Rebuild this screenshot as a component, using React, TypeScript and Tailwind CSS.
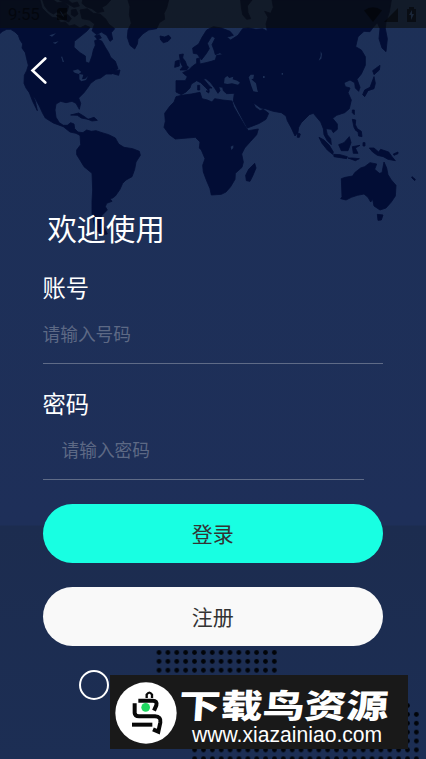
import type { ReactNode } from 'react';

const SEA = '#1d3057';
const LAND = '#020d35';

const land = [
  // north + central america
  'M0 100L8 94 20 88 32 88 45 96 55 106 60 120 68 132 66 144 76 158 80 176 85 196 80 212 73 226 72 250 78 264 88 278 98 304 112 332 106 304 98 286 106 296 118 318 128 340 136 354 160 369 190 380 210 396 228 400 240 406 248 398 234 396 224 386 222 372 212 368 202 376 190 376 178 368 168 352 165 330 168 312 182 304 198 308 216 304 228 310 238 328 242 310 236 294 252 278 264 262 272 250 288 238 302 234 318 222 336 222 344 212 354 206 346 184 332 172 326 158 316 142 306 124 294 118 284 122 286 136 280 150 276 168 268 190 257 186 256 168 240 158 222 142 223 124 238 112 250 102 262 92 270 82 256 76 240 84 224 74 208 78 196 66 182 68 172 54 156 52 140 38 126 24 120 0 0 0Z',
  'M128 0L160 0 172 8 190 6 206 18 202 34 186 42 170 36 160 42 146 34 134 18Z',
  'M168 46L190 48 204 44 214 56 206 66 188 58Z',
  'M178 0L204 0 216 10 232 6 238 18 222 22 204 12Z',
  'M214 30L228 28 234 42 224 50 214 44Z',
  'M248 0L332 0 320 14 306 22 312 34 292 38 276 26 258 20 246 10Z',
  'M240 30L262 26 280 40 300 42 318 58 326 72 344 86 334 98 338 118 330 124 320 106 304 96 290 104 276 92 284 72 268 60 246 56Z',
  'M284 108L298 104 304 114 292 118Z',
  'M322 216L338 204 346 212 360 210 356 226 342 222Z',
  'M212 345L236 339 254 350 264 358 244 354 232 346Z',
  'M264 358L282 352 292 361 276 363Z',
  // greenland, iceland
  'M384 0L506 0 500 24 492 40 494 58 478 68 470 86 446 90 428 102 414 118 412 132 404 147 390 136 382 112 384 90 394 70 388 44 390 20Z',
  'M480 108L494 111 506 106 513 114 504 124 490 128 482 120Z',
  // british isles
  'M538 164L550 162 548 174 556 184 560 196 566 202 560 210 540 210 548 200 542 188Z',
  'M526 184L538 180 538 198 524 202Z',
  // south america
  'M240 404L260 390 274 394 288 392 306 398 326 404 346 414 356 432 372 442 398 446 418 454 421 466 408 486 404 508 396 530 378 540 368 550 360 568 346 588 338 594 330 596 336 604 320 610 316 620 322 630 304 648 308 670 322 702 306 704 286 688 276 640 276 604 278 570 276 520 252 500 240 480 230 464 230 450 242 434Z',
  // africa
  'M545 286L574 282 600 277 606 296 622 300 636 306 644 296 668 300 696 303 701 320 716 346 734 376 745 392 775 387 770 404 752 424 734 444 725 462 730 486 726 502 706 520 705 538 692 560 678 576 664 583 634 585 630 566 619 540 610 516 608 496 615 476 604 450 598 444 600 426 586 412 562 414 526 417 508 404 492 382 496 364 494 340 510 318 522 306 528 290Z',
  // eurasia
  'M528 242L556 242 562 230 548 218 566 210 578 198 590 190 590 176 598 174 600 192 618 188 634 184 646 180 650 166 668 164 660 158 646 164 642 150 636 134 646 114 636 108 622 130 628 146 618 162 604 180 592 162 580 160 578 144 596 132 606 112 620 90 640 80 664 84 690 94 700 106 680 112 692 120 714 106 728 86 744 84 768 88 788 86 802 94 798 72 804 52 794 34 812 40 820 22 816 0 1174 0 1168 36 1158 66 1156 86 1162 116 1158 155 1146 144 1137 116 1140 86 1132 68 1118 84 1110 95 1092 94 1074 110 1067 140 1084 150 1096 170 1096 196 1084 222 1071 238 1080 262 1076 274 1066 264 1064 248 1050 240 1032 248 1036 260 1050 264 1044 278 1054 300 1048 326 1034 338 1010 346 998 355 1012 372 1012 388 1000 398 994 388 978 386 982 404 992 416 994 434 982 422 972 404 970 386 962 366 950 352 940 340 928 344 904 368 896 382 894 396 885 408 874 384 862 362 858 348 844 338 820 334 796 326 782 324 774 318 760 308 766 322 780 332 790 328 806 340 798 358 778 370 742 384 730 362 709 322 700 303 703 280 680 281 670 272 668 262 656 260 660 272 654 280 644 264 632 248 618 236 610 236 628 258 636 264 628 264 626 272 616 262 602 248 590 242 574 252 570 264 558 276 544 284 528 276Z',
  'M722 0L756 0 742 18 744 38 752 56 740 58 728 44 724 22Z',
  'M593 256h6v14h-6Z',
  'M618 273L628 272 626 279Z',
  // japan
  'M1118 212L1126 206 1140 196 1138 210 1122 224Z',
  'M1122 230L1126 250 1122 266 1104 272 1094 290 1088 284 1094 270 1110 262Z',
  // south east asia
  'M1057 330h6v14l-6-6Z',
  'M1057 358L1067 360 1066 374 1072 386 1084 394 1086 410 1076 408 1074 396 1064 386 1070 394 1062 382Z',
  'M957 412L972 420 988 436 1000 456 998 463 982 450 966 430Z',
  'M1001 463L1020 464 1042 470 1040 476 1002 470Z',
  'M1044 474h14l20 2-12 6Z',
  'M1016 434L1032 428 1048 410 1053 428 1044 452 1024 452Z',
  'M1057 440L1080 436 1066 444 1074 460 1060 460Z',
  'M1089 428h6v10h-6Z',
  'M1108 444L1122 444 1136 456 1142 448 1166 456 1176 470 1186 482 1164 478 1150 470 1132 466 1118 456Z',
  'M1180 462l14-6 0 5-12 5Z',
  'M1236 530l10 8-2 4-9-9Z',
  'M892 398L901 402 898 412 892 412Z',
  // madagascar
  'M764 490L768 504 758 528 750 544 739 542 737 526 746 508Z',
  // australia
  'M1024 536L1026 590 1022 596 1038 600 1054 592 1072 586 1092 582 1104 592 1112 606 1118 598 1122 618 1140 630 1158 624 1174 606 1186 588 1188 556 1174 540 1164 524 1160 504 1152 486 1146 518 1138 520 1124 508 1130 492 1110 488 1094 500 1082 504 1064 518 1058 528 1036 532Z',
  'M1132 643L1149 645 1144 660 1134 661Z',
];

// inland seas and lakes
const water = [
  'M672 250L674 234 682 228 688 234 700 230 698 238 712 242 720 248 714 254 696 250 682 252Z',
  'M746 232L752 224 762 224 760 236 754 238 768 250 772 270 774 276 760 274 754 258Z',
  'M218 212L234 208 244 216 236 222 224 218Z',
  'M238 222L250 224 246 238 256 236 264 228 258 240 244 244 238 238Z',
  'M692 440l8-4v8l-6 6Z',
  'M962 154l4 8-2 14-8 6 6-14Z',
  'M148 106l20-6-12 10Z',
  'M158 128l18-4-10 8Z',
  'M186 168l6 18-4 0-4-14Z',
  'M789 228h5v6h-5Z',
  'M845 219h4v5h-4Z',
];

function WorldMap() {
  return (
    <svg className="absolute left-0 top-0" width="426" height="250" viewBox="0 0 1278 750">
      <g stroke={LAND} strokeWidth="2.5" strokeLinejoin="round" fill={LAND}>
        {land.map(d => (
          <path key={d} d={d} />
        ))}
      </g>
      <g fill={SEA}>
        {water.map(d => (
          <path key={d} d={d} />
        ))}
      </g>
    </svg>
  );
}

function Dots() {
  return (
    <svg className="absolute left-0 top-[640px]" width="426" height="119">
      <defs>
        <pattern id="dotsA" x="154.6" y="8.1" width="8.87" height="8.87" patternUnits="userSpaceOnUse">
          <circle cx="4.43" cy="4.43" r="2.4" fill="#010409" />
        </pattern>
        <pattern id="dotsB" x="190.2" y="70" width="8.87" height="8.87" patternUnits="userSpaceOnUse">
          <circle cx="4.43" cy="4.43" r="2.4" fill="#010409" />
        </pattern>
      </defs>
      <rect x="154.6" y="8.1" width="124.2" height="53" fill="url(#dotsA)" />
      <rect x="190.2" y="61.1" width="221.7" height="57.9" fill="url(#dotsB)" />
      <rect x="411.9" y="70" width="8.9" height="49" fill="url(#dotsB)" />
    </svg>
  );
}

function StatusBar() {
  return (
    <div className="relative flex h-7 items-center bg-[#0c0e0a]/60 px-2 text-black/50">
      <span className="font-['Roboto',sans-serif] text-[17px] leading-none tracking-[-0.3px]">9:55</span>
      <svg className="ml-4" width="12" height="14" viewBox="0 0 12 14">
        <path d="M3 1h8v12H1V3Z" fill="currentColor" />
        <path d="M4.5 4.5l3 5" fill="none" stroke="#101a2c" />
      </svg>
      <svg className="ml-auto" width="54" height="18" viewBox="0 0 54 18">
        <path d="M0 5.5Q9-1 18 5.5L9 17Z" fill="currentColor" />
        <path d="M34 3v14H20Z" fill="currentColor" />
        <path d="M43 4h2V2h5v2h2v13h-9Z" fill="currentColor" />
        <path d="M48 5l-3 5h2v5l3-6h-2Z" fill="#1a2638" />
      </svg>
    </div>
  );
}

function Field({ label, placeholder, inset = false }: { label: string; placeholder: string; inset?: boolean }) {
  return (
    <label className="flex h-[116px] flex-col">
      <span className="text-[23.3px] leading-[34px] text-white">{label}</span>
      <input
        placeholder={placeholder}
        className={`mt-2 h-[52px] border-b border-[#5f6b87] bg-transparent pb-[9px] text-[17.7px] text-white outline-none placeholder:text-[#5d6985] ${
          inset ? 'mr-[19px] pl-[19px]' : ''
        }`}
      />
    </label>
  );
}

function PillButton({ children, className }: { children: ReactNode; className: string }) {
  return (
    <button className={`flex h-[59px] w-full items-center justify-center rounded-full text-[21px] text-[#333333] ${className}`}>
      {children}
    </button>
  );
}

function Watermark() {
  return (
    <div className="absolute left-[110px] top-[675px] flex h-[74px] w-[298px] bg-[#191919]">
      <svg className="ml-[5px] mt-[7px] shrink-0" width="62" height="62" viewBox="0 0 186 186">
        <circle cx="93" cy="93" r="92" fill="#fff" />
        <g fill="none" stroke="#080808" strokeWidth="12">
          <path d="M95 48V38q8-12 16 0v10" strokeWidth="7" />
          <path d="M70 56H113Q127 56 124 70L117 86" />
          <path d="M59 64V93Q60 103 72 103H120Q139 104 136 121L130 149 114 142" />
          <path d="M51 128H112" />
        </g>
        <circle cx="92" cy="76" r="13" fill="#20d760" />
      </svg>
      <div className="ml-[2px] flex flex-col text-white">
        <span className="mt-[10px] origin-left -skew-x-3 scale-x-[1.27] whitespace-nowrap text-[33px] font-black leading-[38px]">
          下载鸟资源
        </span>
        <span className="ml-[13px] origin-left scale-x-[0.96] whitespace-nowrap font-['Liberation_Sans',sans-serif] text-[22px] leading-6">
          www.xiazainiao.com
        </span>
      </div>
    </div>
  );
}

export default function App() {
  return (
    <div className="relative h-[759px] w-[426px] overflow-hidden bg-[linear-gradient(#1d3057_0px,#1e2f59_525px,#1c2c4f_526px,#1c2e54_759px)] font-['Noto_Sans_CJK_SC',sans-serif]">
      <WorldMap />
      <Dots />
      <StatusBar />

      <main className="relative flex flex-col pl-[42.5px] pr-[43px]">
        <button className="ml-[-13px] mt-7 h-7 w-5" aria-label="返回">
          <svg width="20" height="28" viewBox="0 0 20 28" fill="none" stroke="#fff" strokeWidth="2.6" strokeLinecap="round">
            <path d="M15.3 2.5L2.5 14.5 15.3 26.5" />
          </svg>
        </button>

        <h1 className="ml-[5px] mt-[120.5px] text-[29.3px] leading-[44px] text-white">欢迎使用</h1>

        <form className="mt-[21.5px] flex flex-col">
          <Field label="账号" placeholder="请输入号码" />
          <Field label="密码" placeholder="请输入密码" inset />
        </form>

        <div className="mt-[2px] flex flex-col gap-6">
          <PillButton className="bg-[#18ffe2]">登录</PillButton>
          <PillButton className="bg-[#f9f9f9]">注册</PillButton>
        </div>

        <span className="ml-9 mt-6 h-[30px] w-[30px] rounded-full border-[2.5px] border-white" />
      </main>

      <Watermark />
    </div>
  );
}
